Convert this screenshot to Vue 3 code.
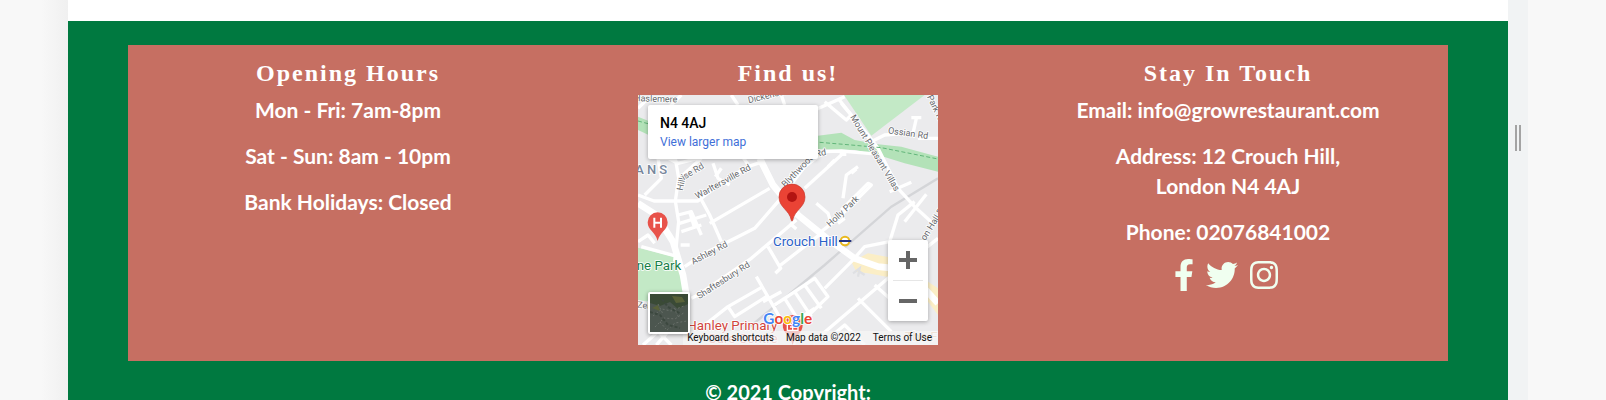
<script setup>
const hours = ['Mon - Fri: 7am-8pm', 'Sat - Sun: 8am - 10pm', 'Bank Holidays: Closed']

const minorRoads = [
  'M0 300L48 318L112 318L180 318L250 262L330 215L380 198',
  'M20 300L70 250L60 190M110 500L122 380L112 318L122 250L112 190L60 190',
  'M135 240L190 190M90 190L120 205L180 190M225 205L240 250L275 270M232 245L250 220',
  'M185 305L215 360L250 440M215 385L395 280',
  'M140 515L200 475L300 425L350 400L420 320L500 215L560 170L610 168L700 176',
  'M500 280L610 180M570 215L590 195M605 178L625 178',
  'M160 610L180 600L340 490L475 375M455 385L475 402M390 455L428 520L412 535M428 510L550 415',
  'M535 325L570 355L580 385M600 385L620 370M550 410L600 370L700 270L690 265L610 345',
  'M660 215L625 240L615 310M640 235L655 222',
  'M640 70L720 160L780 280L830 335L890 390M720 160L690 120L610 25M690 145L740 120L800 115M840 130L900 130',
  'M560 20L625 75L640 60L600 10M530 45L620 5M835 70L825 115M820 68L850 68',
  'M755 290L820 262M800 380L865 298M830 320L780 360L755 440L680 455L640 500L560 580',
  'M410 630L530 550L570 605L450 720M440 610L490 690M470 590L520 665M500 570L550 640M470 690L500 660L530 640',
  'M355 545L410 640L470 750M200 690L270 635L375 575M270 635L290 665L385 605',
  'M550 720L750 550L900 430M660 610L760 710M710 570L800 650M560 740L620 690L680 750',
  'M0 440L30 420L50 445M10 455L120 485M15 750L60 710L100 750M55 750L90 710',
  'M120 360L160 350L190 420M125 385L205 360M130 410L190 390M128 450L155 450M155 350L170 400',
  'M280 0L300 30M430 0L440 30M130 0L90 40M0 40L25 15M375 620L430 590M335 215L310 180',
]

const mainRoads = [
  'M0 325L55 360L105 440L135 540L145 600',
  'M365 190L405 270L480 360L560 425L650 490L720 515L770 520',
  'M850 570L900 625',
]

const streets = [
  { name: 'Haslemere', x: -12, y: 18, turn: 2 },
  { name: 'Dickenson', x: 332, y: 25, turn: -14 },
  { name: 'Hillr', x: 134, y: 288, turn: -78 },
  { name: 'ise Rd', x: 137, y: 256, turn: -31 },
  { name: 'Warltersville Rd', x: 178, y: 313, turn: -29 },
  { name: 'Blythwood', x: 442, y: 278, turn: -46 },
  { name: 'Rd', x: 534, y: 185, turn: -10 },
  { name: 'Mount Pleasant Villas', x: 636, y: 66, turn: 59 },
  { name: 'Ossian Rd', x: 749, y: 115, turn: 8 },
  { name: 'Park Rd', x: 866, y: 5, turn: 64 },
  { name: 'Holly Park', x: 576, y: 397, turn: -43 },
  { name: 'Ashley Rd', x: 166, y: 509, turn: -28 },
  { name: 'Shaftesbury Rd', x: 184, y: 613, turn: -33 },
  { name: 'on Hall Rd', x: 862, y: 438, turn: -58 },
  { name: 'Zel', x: -3, y: 638, turn: 5 },
]

const social = [
  {
    name: 'Facebook',
    box: '0 0 320 512',
    kind: 'facebook',
    path: 'M279.14 288l14.22-92.66h-88.91v-60.13c0-25.35 12.42-50.06 52.24-50.06h40.42V6.26S260.43 0 225.36 0c-73.22 0-121.08 44.38-121.08 124.72v70.62H22.89V288h81.39v224h100.17V288z',
  },
  {
    name: 'Twitter',
    box: '0 0 512 512',
    kind: 'twitter',
    path: 'M459.37 151.716c.325 4.548.325 9.097.325 13.645 0 138.72-105.583 298.558-298.558 298.558-59.452 0-114.68-17.219-161.137-47.106 8.447.974 16.568 1.299 25.34 1.299 49.055 0 94.213-16.568 130.274-44.832-46.132-.975-84.792-31.188-98.112-72.772 6.498.974 12.995 1.624 19.818 1.624 9.421 0 18.843-1.3 27.614-3.573-48.081-9.747-84.143-51.98-84.143-102.985v-1.299c13.969 7.797 30.214 12.67 47.431 13.319-28.264-18.843-46.781-51.005-46.781-87.391 0-19.492 5.197-37.36 14.294-52.954 51.655 63.675 129.3 105.258 216.365 109.807-1.624-7.797-2.599-15.918-2.599-24.04 0-57.828 46.782-104.934 104.934-104.934 30.213 0 57.502 12.67 76.67 33.137 23.715-4.548 46.456-13.32 66.599-25.34-7.798 24.366-24.366 44.833-46.132 57.827 21.117-2.273 41.584-8.122 60.426-16.243-14.292 20.791-32.161 39.308-52.628 54.253z',
  },
  {
    name: 'Instagram',
    box: '0 0 448 512',
    kind: 'instagram',
    path: 'M224.1 141c-63.6 0-114.9 51.3-114.9 114.9s51.3 114.9 114.9 114.9S339 319.5 339 255.9 287.7 141 224.1 141zm0 189.6c-41.1 0-74.7-33.5-74.7-74.7s33.5-74.7 74.7-74.7 74.7 33.5 74.7 74.7-33.6 74.7-74.7 74.7zm146.4-194.3c0 14.9-12 26.8-26.8 26.8-14.9 0-26.8-12-26.8-26.8s12-26.8 26.8-26.8 26.8 12 26.8 26.8zm76.1 27.2c-1.7-35.9-9.9-67.7-36.2-93.9-26.2-26.2-58-34.4-93.9-36.2-37-2.1-147.9-2.1-184.9 0-35.8 1.7-67.6 9.9-93.9 36.1s-34.4 58-36.2 93.9c-2.1 37-2.1 147.9 0 184.9 1.7 35.9 9.9 67.7 36.2 93.9s58 34.4 93.9 36.2c37 2.1 147.9 2.1 184.9 0 35.9-1.7 67.7-9.9 93.9-36.2 26.2-26.2 34.4-58 36.2-93.9 2.1-37 2.1-147.8 0-184.8zM398.8 388c-7.8 19.6-22.9 34.7-42.6 42.6-29.5 11.7-99.5 9-132.1 9s-102.7 2.6-132.1-9c-19.6-7.8-34.7-22.9-42.6-42.6-11.7-29.5-9-99.5-9-132.1s-2.6-102.7 9-132.1c7.8-19.6 22.9-34.7 42.6-42.6 29.5-11.7 99.5-9 132.1-9s102.7-2.6 132.1 9c19.6 7.8 34.7 22.9 42.6 42.6 11.7 29.5 9 99.5 9 132.1s2.7 102.7-9 132.1z',
  },
]
</script>

<template>
  <div class="preview">
    <div class="gutter"></div>
    <main class="page">
      <footer class="footer">
        <div class="panel">
          <section class="column">
            <h2 class="heading">Opening Hours</h2>
            <p v-for="line in hours" :key="line" class="line">{{ line }}</p>
          </section>

          <section class="column">
            <h2 class="heading">Find us!</h2>
            <div class="map">
              <svg class="tiles" viewBox="0 0 900 750" role="img" aria-label="Map of Crouch Hill">
                <rect width="900" height="750" fill="#ebebed" />
                <g fill="#c3e9c6">
                  <path d="M618 0H860L700 122Z" />
                  <path d="M0 458L118 488L140 560L150 640L0 615Z" />
                </g>
                <path d="M0 65L32 78V120L0 105ZM540 122L610 113L650 135L720 148L790 155L900 185V230L800 205L720 180L650 165L540 162Z" fill="#b3e2b8" />
                <g fill="#fbeec6">
                  <path d="M640 500L690 475L770 490V550L690 535L655 530Z" />
                  <path d="M870 560L900 580V660L870 620Z" />
                </g>
                <path d="M330 700L560 510L760 335L900 250" fill="none" stroke="#d4d5d8" stroke-width="7" />
                <g fill="none" stroke="#fff" stroke-width="10" stroke-linejoin="round">
                  <path v-for="d in minorRoads" :key="d" :d="d" />
                </g>
                <g fill="none" stroke="#fff" stroke-width="20" stroke-linejoin="round">
                  <path v-for="d in mainRoads" :key="d" :d="d" />
                </g>
                <path d="M545 142L640 150L730 158L900 192M0 78L30 86" fill="none" stroke="#62b67a" stroke-width="3" stroke-dasharray="12 7" />
                <path d="M645 535L665 520L660 545M665 530L680 540" fill="none" stroke="#dfe0e3" stroke-width="7" />

                <g class="street">
                  <text
                    v-for="s in streets"
                    :key="s.name"
                    :transform="`translate(${s.x} ${s.y}) rotate(${s.turn})`"
                  >{{ s.name }}</text>
                </g>
                <text class="district" x="-8" y="236">ANS</text>
                <text class="park" x="-4" y="524">ne Park</text>
                <text class="station" x="405" y="452">Crouch Hill</text>
                <circle cx="621" cy="438" r="13" fill="#fff" stroke="#e9b91f" stroke-width="6" />
                <path d="M603 438H640" stroke="#26357f" stroke-width="6" />

                <text class="school" x="148" y="704">Hanley Primary</text>
                <text class="school faint" x="210" y="744">Care Centre</text>
                <text class="place faint" x="800" y="738">The F</text>
                <path d="M434 690A30 30 0 0 1 494 690C494 715 472 720 464 750C456 720 434 715 434 690Z" fill="#e8524a" />
                <path d="M448 688H480V706H448ZM464 682V706M456 696H472" fill="none" stroke="#fff" stroke-width="4" />

                <path d="M29 382A30 30 0 0 1 89 382C89 406 66 410 59 438C52 410 29 406 29 382Z" fill="#e8524a" />
                <path d="M49 368V398M69 368V398M49 383H69" fill="none" stroke="#fff" stroke-width="6" />

                <path d="M423 306A39 39 0 0 1 501 306C501 338 469 345 464 376Q462 381 460 376C455 345 423 338 423 306Z" fill="#ea4335" stroke="#c5362b" stroke-width="2" />
                <circle cx="462" cy="306" r="15" fill="#b31412" />

                <rect x="135" y="708" width="765" height="42" fill="#f5f5f5" fill-opacity="0.72" />
                <text class="google" x="376" y="686"><tspan fill="#4285f4">G</tspan><tspan fill="#ea4335">o</tspan><tspan fill="#fbbc05">o</tspan><tspan fill="#4285f4">g</tspan><tspan fill="#34a853">l</tspan><tspan fill="#ea4335">e</tspan></text>
              </svg>

              <div class="place-card">
                <strong class="place-name">N4 4AJ</strong>
                <a class="larger" href="#map">View larger map</a>
              </div>

              <button class="satellite" type="button" aria-label="Show satellite imagery">
                <svg viewBox="0 0 38 38" aria-hidden="true">
                  <rect width="38" height="38" fill="#4c564f" />
                  <path d="M0 0H38V10L28 15L20 8L10 12L0 9Z" fill="#3a4a36" />
                  <path d="M22 2L32 3L35 8L26 9ZM2 14L8 11L10 17Z" fill="#596239" />
                  <path d="M3 22L12 15L21 17L34 12M5 33L14 24L25 25L35 18M17 36L25 29L37 27M8 10L13 20M24 14L29 24M10 28L16 35" fill="none" stroke="#69706a" stroke-width="1" stroke-dasharray="2 2" />
                  <path d="M0 18L10 21L18 31L30 34M12 5L18 13L31 20" fill="none" stroke="#3c483f" stroke-width="2" stroke-dasharray="3 2" />
                </svg>
              </button>

              <div class="zoom">
                <button type="button" aria-label="Zoom in">
                  <svg viewBox="0 0 18 18" aria-hidden="true"><path d="M7 0h4v7h7v4h-7v7H7v-7H0V7h7z" /></svg>
                </button>
                <button type="button" aria-label="Zoom out">
                  <svg viewBox="0 0 18 18" aria-hidden="true"><path d="M0 7h18v4H0z" /></svg>
                </button>
              </div>

              <div class="legal">
                <button type="button">Keyboard shortcuts</button>
                <span>Map data ©2022</span>
                <a href="#terms">Terms of Use</a>
              </div>
            </div>
          </section>

          <section class="column">
            <h2 class="heading">Stay In Touch</h2>
            <p class="line">Email: info@growrestaurant.com</p>
            <p class="line">Address: 12 Crouch Hill,<br />London N4 4AJ</p>
            <p class="line">Phone: 02076841002</p>
            <nav class="social" aria-label="Social media">
              <a v-for="s in social" :key="s.name" href="#social" :aria-label="s.name">
                <svg :class="s.kind" :viewBox="s.box" aria-hidden="true"><path :d="s.path" /></svg>
              </a>
            </nav>
          </section>
        </div>
        <p class="copyright">© 2021 Copyright:</p>
      </footer>
    </main>
    <div class="handle"><span class="grip"></span></div>
    <div class="outside"></div>
  </div>
</template>

<style>
body {
  margin: 0;
}
</style>

<style scoped>
.preview {
  display: grid;
  grid-template-columns: 68px 1fr 20px 78px;
  height: 100vh;
  overflow: hidden;
  background: #f8f8f8;
  font-family: Lato, "Open Sans", sans-serif;
}
.gutter {
  background: linear-gradient(to right, #f8f8f8 60%, #f0f0f0);
}
.page {
  padding-top: 21px;
  background: #fff;
}
.footer {
  padding: 24px 60px;
  background: #007940;
  color: #fff;
}
.panel {
  display: grid;
  grid-template-columns: repeat(3, 1fr);
  padding: 10px 0 16px;
  background: #c66f62;
  text-align: center;
}
.heading {
  margin: 0 0 4px;
  font-family: "Liberation Serif", serif;
  font-size: 24px;
  font-weight: 700;
  line-height: 36px;
  letter-spacing: 2px;
}
.line {
  margin: 0 0 16px;
  font-size: 21px;
  font-weight: 700;
  line-height: 30px;
}
.copyright {
  margin: 16px 0 0;
  font-size: 20px;
  font-weight: 700;
  line-height: 30px;
  text-align: center;
}
.social {
  display: flex;
  justify-content: center;
  gap: 12px;
  margin-top: -4px;
  padding-right: 4px;
}
.social a {
  display: block;
  height: 32px;
}
.social svg {
  display: block;
  height: 32px;
  fill: #f0fff0;
}
.facebook {
  width: 20px;
}
.twitter {
  width: 32px;
}
.instagram {
  width: 28px;
}

.map {
  position: relative;
  width: 300px;
  margin: 0 auto;
  overflow: hidden;
  font-family: Roboto, sans-serif;
  text-align: left;
}
.tiles {
  display: block;
  width: 100%;
}
.tiles text {
  font-family: Roboto, sans-serif;
  paint-order: stroke;
  stroke: #fff;
  stroke-width: 5px;
  stroke-linejoin: round;
}
.street text {
  font-size: 27px;
  fill: #66696d;
}
.tiles .district {
  font-size: 39px;
  font-weight: 500;
  letter-spacing: 9px;
  fill: #77869c;
}
.tiles .park {
  font-size: 40px;
  fill: #188048;
}
.tiles .station {
  font-size: 40px;
  fill: #2b62c8;
}
.tiles .school {
  font-size: 40px;
  fill: #d0443c;
}
.tiles .place {
  font-size: 40px;
  fill: #c98a4b;
}
.tiles .faint {
  fill-opacity: 0.7;
}
.tiles .google {
  font-family: Lato, sans-serif;
  font-size: 46px;
  font-weight: 700;
}

.place-card {
  position: absolute;
  top: 10px;
  left: 10px;
  box-sizing: border-box;
  width: 170px;
  padding: 9px 12px 8px;
  border-radius: 2px;
  background: #fff;
  box-shadow: 0 1px 4px rgba(0, 0, 0, 0.3);
}
.place-name {
  display: block;
  color: #000;
  font-size: 14px;
  font-weight: 500;
  line-height: 18px;
}
.larger {
  display: block;
  margin-top: 1px;
  color: #3f6fd8;
  font-size: 12px;
  line-height: 18px;
  text-decoration: none;
}
.satellite {
  position: absolute;
  bottom: 11px;
  left: 10px;
  width: 42px;
  height: 42px;
  padding: 0;
  border: 2px solid #fff;
  border-radius: 2px;
  background: #465047;
  box-shadow: 0 1px 4px rgba(0, 0, 0, 0.4);
}
.satellite svg {
  display: block;
  width: 100%;
}
.zoom {
  position: absolute;
  right: 10px;
  bottom: 24px;
  width: 40px;
  border-radius: 2px;
  background: #fff;
  box-shadow: 0 1px 4px rgba(0, 0, 0, 0.3);
}
.zoom button {
  display: grid;
  place-items: center;
  width: 100%;
  height: 40px;
  padding: 0;
  border: 0;
  background: none;
}
.zoom button + button::before {
  content: "";
  width: 30px;
  height: 1px;
  background: #e6e6e6;
}
.zoom button + button {
  height: 41px;
  grid-template-rows: 1px 1fr;
}
.zoom svg {
  width: 18px;
  height: 18px;
  fill: #666;
}
.legal {
  position: absolute;
  right: 6px;
  bottom: 0;
  display: flex;
  gap: 12px;
  font-size: 10px;
  line-height: 14px;
  white-space: nowrap;
}
.legal button,
.legal a,
.legal span {
  padding: 0;
  border: 0;
  background: none;
  color: #111;
  font: inherit;
  text-decoration: none;
}

.handle {
  display: flex;
  justify-content: center;
  padding-top: 125px;
  background: #f1f3f4;
}
.grip {
  width: 2px;
  height: 26px;
  border: solid #a3a3a3;
  border-width: 0 2px;
}
.outside {
  background: #f8f8f8;
}
</style>
